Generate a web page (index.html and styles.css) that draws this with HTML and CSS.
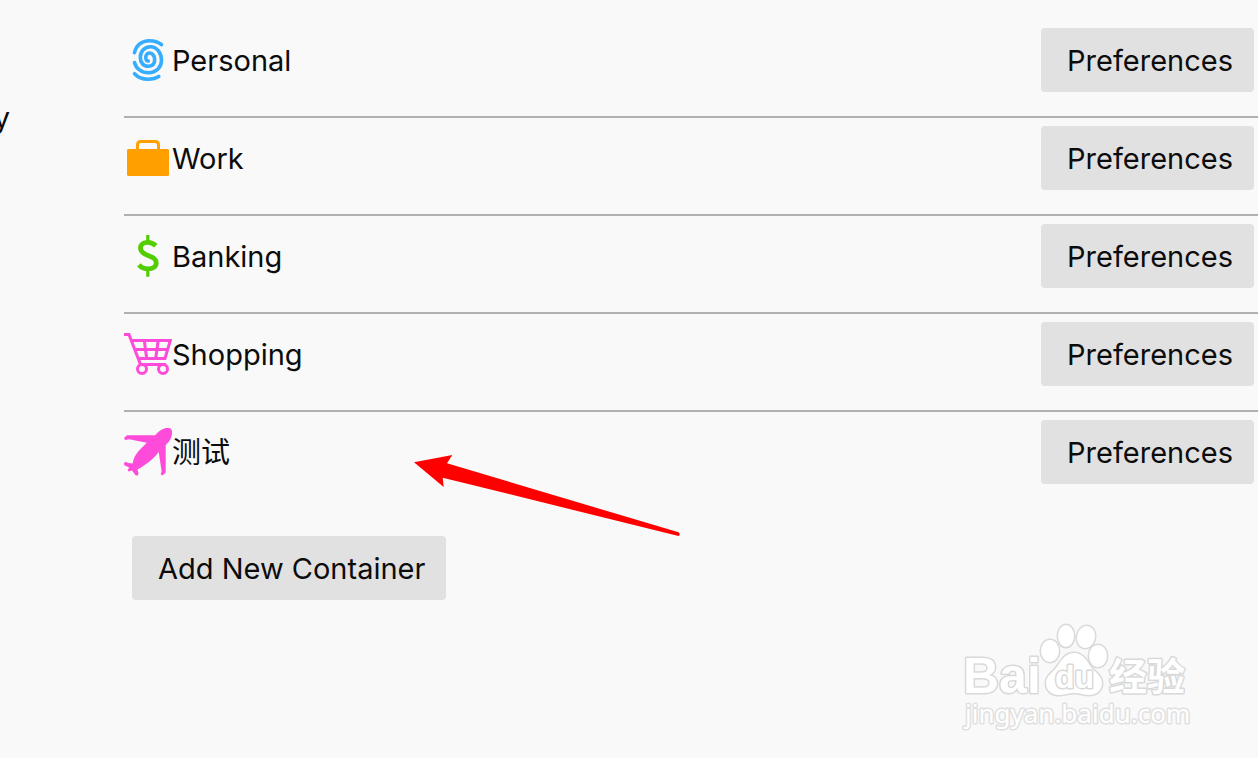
FILE: index.html
```
<!DOCTYPE html>
<html lang="en">
<head>
<meta charset="utf-8">
<title>Container Tabs</title>
<link rel="stylesheet" href="styles.css">
</head>
<body>

<div id="sidebar"><span class="category">y</span></div>

<div id="main">
  <ul class="containers">
    <li class="container-row">
      <svg class="icon blue" viewBox="0 0 48 48" aria-hidden="true">
        <g fill="none" stroke="currentColor" stroke-width="3.6" stroke-linecap="round">
          <path d="M10.5 16.7C12 9 18 4.7 25 4.7C30 4.7 34.5 6 37.5 8.7"/>
          <path d="M10.5 26.5C12 32.5 17.5 36.7 24.5 36.7C32.5 36.7 37.5 31 37.5 24.5C37.5 17 33 10.7 26.5 10.7C20 10.7 16.3 16 16.3 21.5C16.3 26.5 19.5 30.3 24 30.3C28.5 30.3 30.7 27.5 30.7 23.5C30.7 19.5 28 17 25.5 17C23 17 21.7 19.5 21.8 22C21.9 24 22.8 25.2 24.3 25"/>
          <path d="M10.5 37.7C14 41.5 19 43.2 24 43.2C28.5 43.2 32 42.3 34.8 40.5"/>
        </g>
      </svg>
      <span class="name">Personal</span>
      <button type="button">Preferences</button>
    </li>
    <li class="container-row">
      <svg class="icon orange" viewBox="0 0 48 48" aria-hidden="true">
        <rect x="3" y="15" width="42" height="27" rx="1.5" fill="currentColor"/>
        <path d="M13.5 16V11Q13.5 7.5 17 7.5H31Q34.5 7.5 34.5 11V16" fill="none" stroke="currentColor" stroke-width="3"/>
      </svg>
      <span class="name">Work</span>
      <button type="button">Preferences</button>
    </li>
    <li class="container-row">
      <svg class="icon green" viewBox="0 0 48 48" aria-hidden="true">
        <g fill="none" stroke="currentColor">
          <path d="M23.8 3V9M23.8 38V44.7" stroke-width="3.2"/>
          <path d="M31.8 13.8C29.5 11.5 27 10.3 23.8 10.3C19.3 10.3 16.5 12.5 16.5 16C16.5 20.2 19.5 21.8 24 23.5C29.5 25.5 32.2 27 32.2 31C32.2 34.8 29 36.8 24 36.8C20.3 36.8 17.3 35.5 14.9 32.8" stroke-width="4.8"/>
        </g>
      </svg>
      <span class="name">Banking</span>
      <button type="button">Preferences</button>
    </li>
    <li class="container-row">
      <svg class="icon pink" viewBox="0 0 48 48" aria-hidden="true">
        <g fill="none" stroke="currentColor" stroke-width="3">
          <path d="M0 4.5H5L16.5 34.5H42"/>
          <path d="M7 10.5H46.3L41 28.5H14M11 19.5H43.5M20.3 10.5L22.7 28.5M34.2 10.5L31.7 28.5"/>
          <circle cx="18" cy="39" r="4.5"/>
          <circle cx="39" cy="39" r="4.5"/>
        </g>
      </svg>
      <span class="name">Shopping</span>
      <button type="button">Preferences</button>
    </li>
    <li class="container-row">
      <svg class="icon pink" viewBox="0 0 48 48" aria-hidden="true">
        <path fill="currentColor" d="M0 10L3 7.3H31C34 4 37.500 .8 41 .2C43 0 45 0 46.5 .4C48 1.3 48.3 4 47.8 7C47 11 45 14 41.7 17V44.5L38.5 47.6L36.7 46.5L37.6 43L34.7 24C31 29 26 33.500 21 36.7C18 39 16 40.3 13.5 41.2L14.5 45.7L13.5 47.7L11.3 47L8 42.500L4.7 43.5L3.6 42L5.3 39.5L.3 37.3L0 35.3L1.3 33.8L4.5 35.1L8.7 35.5C9.2 30 12 26 15.5 22L22.8 14.8L5 11.3L1 12Z"/>
      </svg>
      <span class="name">测试</span>
      <button type="button">Preferences</button>
      <svg class="pointer" viewBox="0 0 268 84" aria-hidden="true">
        <path fill="#f00" d="M0 8.3L38.3 1L33 9.3L264.5 78.3Q267 80.5 264.5 82L28.7 23.7L29.7 33Z"/>
      </svg>
    </li>
  </ul>
  <button type="button" class="add">Add New Container</button>
</div>

<svg class="watermark" viewBox="0 0 236 120" role="img" aria-label="Baidu">
  <g class="mark">
    <text class="bai" x="3" y="77">Bai</text>
    <ellipse cx="90" cy="35" rx="9" ry="11"/>
    <ellipse cx="106" cy="20" rx="8" ry="11"/>
    <ellipse cx="126" cy="21" rx="9" ry="11" transform="rotate(12 126 21)"/>
    <ellipse cx="138" cy="40" rx="9" ry="11"/>
    <path d="M114 37C104 37 100 47 96 52C91 58 86 60 86 67C86 75 92 79 99 79C104 79 108 77 114 77C120 77 124 79 129 79C137 79 142 74 142 67C142 60 136 57 131 51C127 45 123 37 114 37Z"/>
    <text class="du" x="95" y="72">du</text>
    <text class="cjk" x="149" y="74">经验</text>
    <text class="url" x="5" y="107">jingyan.baidu.com</text>
  </g>
</svg>

</body>
</html>
```
FILE: styles.css
```
body {
  display:flex;
  position:relative;
  min-height:100vh;
  margin:0;
  overflow:hidden;
  background:#f9f9f9;
  color:#0c0c0d;
  font-family:Inter, "Noto Sans CJK SC", sans-serif;
  font-size:29px;
  line-height:40px;
}

#sidebar {
  flex:0 0 124px;
  padding-top:98px;
}

.category {
  display:flex;
  justify-content:flex-end;
  width:10px;
  overflow:hidden;
}

#main {
  flex:1;
  min-width:0;
  padding-top:20px;
}

.containers {
  list-style:none;
  margin:0 0 28px;
  padding:0;
}

.container-row {
  display:flex;
  align-items:center;
  position:relative;
  padding:8px 4px 24px 0;
  border-bottom:2px solid #b1b1b1;
}

.container-row:last-child {
  border-bottom:none;
}

.icon {
  flex:none;
  width:48px;
  height:48px;
}

.blue { color:#37adff; }
.orange { color:#ff9f00; }
.green { color:#51cd00; }
.pink { color:#ff4bda; }

.name {
  flex:1;
  padding-top:2px;
}

button {
  height:64px;
  padding:2px 21px 0 26px;
  border:none;
  border-radius:4px;
  background:#e1e1e1;
  color:inherit;
  font:inherit;
}

.add {
  margin-left:8px;
}

/* red arrow over the newest container */
.pointer {
  position:absolute;
  left:290px;
  top:42px;
  width:268px;
  height:84px;
}

.watermark {
  position:absolute;
  right:62px;
  bottom:22px;
  width:236px;
  height:120px;
}

.mark {
  fill:#fff;
  stroke:#d9d9d9;
  stroke-width:3px;
  stroke-linejoin:round;
  paint-order:stroke;
}

.bai {
  font:bold 50px "Liberation Sans", sans-serif;
}

.du {
  font:bold 32px "Liberation Sans", sans-serif;
}

.cjk {
  font:bold 38px "Noto Sans CJK SC", sans-serif;
}

.url {
  font:26px "Noto Sans", sans-serif;
  stroke:#e0e0e0;
}
```
